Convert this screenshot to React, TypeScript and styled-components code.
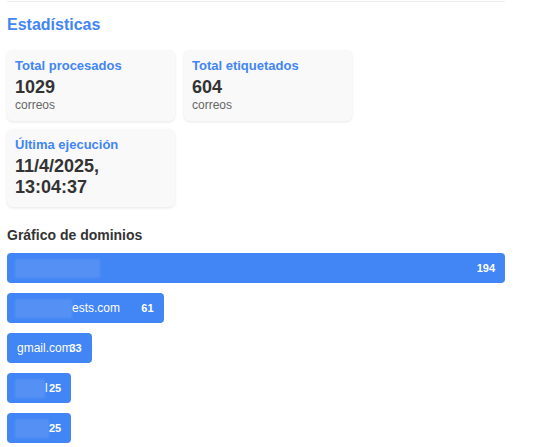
import React from "react";
import styled, { createGlobalStyle } from "styled-components";

const GlobalStyle = createGlobalStyle`
  body {
    margin: 0;
    background: #ffffff;
    font-family: "Liberation Sans", Arial, sans-serif;
  }
`;

const Page = styled.div`
  width: 498px;
  padding: 1px 0 0 7px;
`;

const Section = styled.section`
  border-top: 1px solid #ececec;
`;

const Title = styled.h2`
  margin: 14px 0 16px;
  font-size: 16px;
  line-height: 18px;
  font-weight: 700;
  color: #4285f4;
`;

const Cards = styled.div`
  display: flex;
  flex-wrap: wrap;
  gap: 8px 9px;
`;

const Card = styled.div`
  box-sizing: border-box;
  width: 168px;
  padding: 8px 8px 9px;
  background: #f9f9f9;
  border-radius: 6px;
  box-shadow: 0 1px 3px rgba(0, 0, 0, 0.1);
`;

const CardTitle = styled.div`
  font-size: 13px;
  line-height: 15px;
  font-weight: 700;
  color: #4285f4;
  margin-bottom: 4px;
`;

const CardValue = styled.div`
  font-size: 18px;
  line-height: 21px;
  font-weight: 700;
  color: #333333;
`;

const CardUnit = styled.div`
  font-size: 12px;
  line-height: 14px;
  color: #666666;
`;

const ChartTitle = styled.h3`
  margin: 20px 0 10px;
  font-size: 14px;
  line-height: 16px;
  font-weight: 700;
  color: #333333;
`;

const Bars = styled.div`
  display: flex;
  flex-direction: column;
  gap: 10px;
`;

const Bar = styled.div`
  box-sizing: border-box;
  height: 30px;
  padding: 0 10px;
  display: flex;
  align-items: center;
  justify-content: space-between;
  background: #4285f4;
  border-radius: 4px;
  color: #ffffff;
`;

const BarLabel = styled.span`
  min-width: 0;
  white-space: nowrap;
  font-size: 12px;
  line-height: 14px;
  display: flex;
  align-items: center;
`;

const BarValue = styled.span`
  flex-shrink: 0;
  font-size: 11px;
  line-height: 13px;
  font-weight: 700;
  position: relative;
`;

const Redacted = styled.span<{ $w: number }>`
  display: inline-block;
  width: ${(p) => p.$w}px;
  height: 19px;
  margin-left: -2px;
  background: rgba(255, 255, 255, 0.1);
  filter: blur(1px);
`;

type Row = { value: number; hidden?: number; text?: string };

const rows: Row[] = [
  { value: 194, hidden: 85 },
  { value: 61, hidden: 57, text: "ests.com" },
  { value: 33, text: "gmail.com" },
  { value: 25, hidden: 30, text: "l" },
  { value: 25, hidden: 35 },
];

const max = 194;

export default function App() {
  return (
    <>
      <GlobalStyle />
      <Page>
        <Section>
          <Title>Estadísticas</Title>
          <Cards>
            <Card>
              <CardTitle>Total procesados</CardTitle>
              <CardValue>1029</CardValue>
              <CardUnit>correos</CardUnit>
            </Card>
            <Card>
              <CardTitle>Total etiquetados</CardTitle>
              <CardValue>604</CardValue>
              <CardUnit>correos</CardUnit>
            </Card>
            <Card>
              <CardTitle>Última ejecución</CardTitle>
              <CardValue>11/4/2025, 13:04:37</CardValue>
            </Card>
          </Cards>
          <ChartTitle>Gráfico de dominios</ChartTitle>
          <Bars>
            {rows.map((r, i) => (
              <Bar key={i} style={{ width: `${(r.value / max) * 100}%` }}>
                <BarLabel>
                  {r.hidden ? <Redacted $w={r.hidden} /> : null}
                  {r.text}
                </BarLabel>
                <BarValue>{r.value}</BarValue>
              </Bar>
            ))}
          </Bars>
        </Section>
      </Page>
    </>
  );
}
